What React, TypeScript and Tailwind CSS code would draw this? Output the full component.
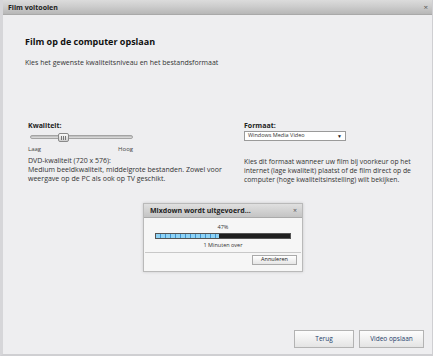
import React from 'react';

function SliderThumb() {
  return (
    <div className="absolute left-[27px] top-[-3px] w-[11px] h-[9px] rounded-[2px] border border-[#8a8a8a] bg-gradient-to-b from-[#fafafa] to-[#cfcfcf] flex items-center justify-center gap-[1px]">
      <span className="w-px h-[4px] bg-[#777]" />
      <span className="w-px h-[4px] bg-[#777]" />
      <span className="w-px h-[4px] bg-[#777]" />
    </div>
  );
}

function App() {
  return (
    <div className="w-[435px] h-[358px] bg-white overflow-hidden font-['Open_Sans',sans-serif] text-[#333]">
      <div className="relative w-[433px] h-[356px] flex flex-col border-l-[3px] border-r border-b-2 border-[#cfcfd2] border-l-[#d6d6d9]">
        {/* title bar */}
        <div className="h-[15px] shrink-0 flex items-center justify-between pl-[5px] pr-[4px] bg-gradient-to-b from-[#dcdcdc] via-[#cbcbcb] to-[#b7b7b7] border-b border-[#a9a9a9]">
          <span className="text-[7px] font-bold text-[#222] leading-none">Film voltooien</span>
          <span className="text-[8px] text-[#555] leading-none">×</span>
        </div>

        {/* body */}
        <div className="flex-1 flex flex-col bg-[#eeeef0] pl-[22px] pr-[8px] pt-[21px]">
          <h1 className="text-[9px] font-bold text-[#111] leading-[12px]">Film op de computer opslaan</h1>
          <p className="mt-[10px] text-[7px] leading-[9px] text-[#333]">Kies het gewenste kwaliteitsniveau en het bestandsformaat</p>

          <div className="mt-[54px] grid grid-cols-[216px_1fr] pl-[3px]">
            {/* quality */}
            <div className="flex flex-col">
              <span className="text-[7px] font-bold leading-[9px] text-[#222]">Kwaliteit:</span>
              <div className="relative mt-[5px] ml-[2px] w-[103px] h-[4px] rounded-full bg-gradient-to-b from-[#b8b8b8] to-[#e2e2e2] border border-[#a4a4a4]">
                <SliderThumb />
              </div>
              <div className="mt-[6px] w-[105px] flex justify-between text-[6px] leading-[8px] text-[#444]">
                <span>Laag</span>
                <span>Hoog</span>
              </div>
              <p className="mt-[3px] w-[196px] text-[7px] leading-[9px] text-[#333]">
                DVD-kwaliteit (720 x 576):<br />
                Medium beeldkwaliteit, middelgrote bestanden. Zowel voor weergave op de PC als ook op TV geschikt.
              </p>
            </div>

            {/* format */}
            <div className="flex flex-col">
              <span className="text-[7px] font-bold leading-[9px] text-[#222]">Formaat:</span>
              <div className="mt-[1px] w-[102px] h-[10px] flex items-center justify-between px-[3px] bg-white border border-[#9a9a9a]">
                <span className="text-[5.5px] leading-none text-[#333]">Windows Media Video</span>
                <span className="text-[5px] leading-none text-[#222]">▼</span>
              </div>
              <p className="mt-[16px] w-[176px] text-[6.8px] leading-[9px] text-[#333]">
                Kies dit formaat wanneer uw film bij voorkeur op het internet (lage kwaliteit) plaatst of de film direct op de computer (hoge kwaliteitsinstelling) wilt bekijken.
              </p>
            </div>
          </div>

          <div className="mt-auto mb-[6px] flex justify-end gap-[5px]">
            <button className="w-[60px] h-[18px] border border-[#b3b3b3] bg-gradient-to-b from-[#fdfdfd] to-[#e4e4e4] text-[6.5px] text-[#1e3f6b]">Terug</button>
            <button className="w-[65px] h-[18px] border border-[#b3b3b3] bg-gradient-to-b from-[#fdfdfd] to-[#e4e4e4] text-[6.5px] text-[#1e3f6b]">Video opslaan</button>
          </div>
        </div>

        {/* mixdown dialog */}
        <div className="absolute left-[140px] top-[203px] w-[160px] h-[69px] flex flex-col border border-[#b9b9b9] bg-[#f6f6f6] shadow-[0_0_3px_rgba(0,0,0,0.15)]">
          <div className="h-[14px] shrink-0 flex items-center justify-between pl-[6px] pr-[5px] bg-gradient-to-b from-[#e0e0e0] to-[#c4c4c4] border-b border-[#aaa]">
            <span className="text-[7px] font-bold text-[#222] leading-none">Mixdown wordt uitgevoerd...</span>
            <span className="text-[7px] text-[#555] leading-none">×</span>
          </div>
          <div className="flex flex-col items-center pt-[6px]">
            <span className="text-[5.5px] leading-[7px] text-[#333]">47%</span>
            <div className="mt-[2px] w-[136px] h-[6px] bg-[#1f1f1f] border border-[#555] flex">
              <div className="w-[47%] h-full bg-[repeating-linear-gradient(90deg,#8fd3f5_0px,#8fd3f5_4px,#3d93cf_4px,#3d93cf_5px)]" />
            </div>
            <span className="mt-[3px] text-[5.5px] leading-[7px] text-[#333]">1 Minuten over</span>
          </div>
          <div className="mt-[3px] mx-[1px] border-t border-[#c8c8c8]" />
          <div className="flex justify-end pr-[5px] pt-[2px]">
            <button className="w-[45px] h-[10px] border border-[#aaa] bg-gradient-to-b from-white to-[#e6e6e6] text-[5.5px] leading-none text-[#222]">Annuleren</button>
          </div>
        </div>
      </div>
    </div>
  );
}

export default App;
